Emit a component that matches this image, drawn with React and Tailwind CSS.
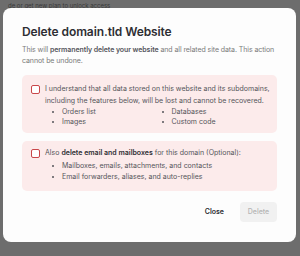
export default function App() {
  return (
    <div className="w-[300px] h-[256px] bg-[#6d6d6d] overflow-hidden relative font-['Inter',sans-serif]">
      <div className="absolute left-[8px] top-[3px] text-[6px] text-[#3a3a3a] leading-none">de or get new plan to unlock access</div>
      <div className="absolute left-[3px] top-[8px] w-[293px] h-[234px] bg-[#fdfdfd] rounded-[8px] px-[19px] pt-[16px]">
        <h2 className="text-[12px] font-semibold text-[#2e2e33] leading-[16px] tracking-[-0.1px]">Delete domain.tld Website</h2>
        <p className="mt-[4px] text-[7px] leading-[11px] text-[#7a7a7a] tracking-[-0.08px]">
          This will <span className="font-semibold text-[#55555c]">permanently delete your website</span> and all related site data. This action cannot be undone.
        </p>
        <div className="mt-[9px] bg-[#fcebeb] rounded-[5px] pl-[9px] pr-[6px] pt-[8px] pb-[6px] flex gap-[5px]">
          <div className="w-[9px] h-[9px] mt-[2px] shrink-0 border-[1.5px] border-[#c9474a] rounded-[2px] bg-white" />
          <div className="text-[7px] text-[#55555a]">
            <p className="leading-[12px]">I understand that all data stored on this website and its subdomains, including the features below, will be lost and cannot be recovered.</p>
            <ul className="grid grid-cols-2 pl-[7px] leading-[10px]">
              <li className="list-disc list-inside">Orders list</li>
              <li className="list-disc list-inside">Databases</li>
              <li className="list-disc list-inside">Images</li>
              <li className="list-disc list-inside">Custom code</li>
            </ul>
          </div>
        </div>
        <div className="mt-[8px] bg-[#fcebeb] rounded-[5px] pl-[9px] pr-[6px] pt-[6px] pb-[9px] flex gap-[5px]">
          <div className="w-[9px] h-[9px] mt-[2px] shrink-0 border-[1.5px] border-[#c9474a] rounded-[2px] bg-white" />
          <div className="text-[7px] text-[#55555a]">
            <p className="leading-[12px]">Also <span className="font-semibold text-[#2e2e33]">delete email and mailboxes</span> for this domain (Optional):</p>
            <ul className="pl-[7px] leading-[11px] mt-[1px]">
              <li className="list-disc list-inside">Mailboxes, emails, attachments, and contacts</li>
              <li className="list-disc list-inside">Email forwarders, aliases, and auto-replies</li>
            </ul>
          </div>
        </div>
        <div className="mt-[11px] flex justify-end items-center gap-[16px]">
          <button className="text-[7px] font-semibold text-[#2e2e33]">Close</button>
          <button className="w-[37px] h-[20px] rounded-[4px] bg-[#f1f1f1] text-[7px] font-medium text-[#b5b5b5]">Delete</button>
        </div>
      </div>
    </div>
  )
}
